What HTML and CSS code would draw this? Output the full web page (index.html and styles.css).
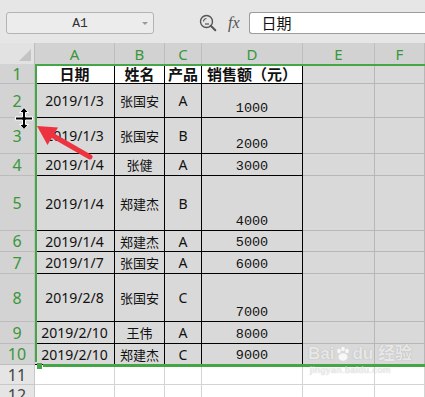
FILE: index.html
```html
<!DOCTYPE html>
<html lang="zh">
<head>
    <meta charset="UTF-8">
    <title>表格</title>
    <link rel="stylesheet" href="styles.css">
</head>
<body>
    <div class="toolbar">
        <div class="namebox">A1<span class="caret"></span></div>
        <svg class="zoom-icon" width="18" height="18" viewBox="0 0 18 18">
            <circle cx="7.5" cy="7.5" r="6" fill="none" stroke="#555" stroke-width="1.4"/>
            <path d="M4.5 7.5a3 3 0 0 1 3-3" fill="none" stroke="#555" stroke-width="1.2"/>
            <path d="M6 10h4" stroke="#555" stroke-width="1.2"/>
            <path d="M11.8 11.8l4.5 4.5" stroke="#555" stroke-width="2" stroke-linecap="round"/>
        </svg>
        <span class="fx">fx</span>
        <div class="formula">日期</div>
    </div>

    <div class="sheet">
        <div class="row colhead">
            <div class="cell corner"><span class="tri"></span></div>
            <div class="cell ca">A</div>
            <div class="cell cb">B</div>
            <div class="cell cc">C</div>
            <div class="cell cd">D</div>
            <div class="cell ce">E</div>
            <div class="cell cf">F</div>
        </div>
        <div class="row h20">
            <div class="cell rh">1</div>
            <div class="cell ca t w th">日期</div>
            <div class="cell cb t w th">姓名</div>
            <div class="cell cc t w th">产品</div>
            <div class="cell cd t w th">销售额（元）</div>
            <div class="cell ce"></div>
            <div class="cell cf"></div>
        </div>
        <div class="row h34">
            <div class="cell rh">2</div>
            <div class="cell ca t dt">2019/1/3</div>
            <div class="cell cb t nm">张国安</div>
            <div class="cell cc t dt">A</div>
            <div class="cell cd t amt">1000</div>
            <div class="cell ce"></div>
            <div class="cell cf"></div>
        </div>
        <div class="row h36">
            <div class="cell rh">3</div>
            <div class="cell ca t dt">2019/1/3</div>
            <div class="cell cb t nm">张国安</div>
            <div class="cell cc t dt">B</div>
            <div class="cell cd t amt">2000</div>
            <div class="cell ce"></div>
            <div class="cell cf"></div>
        </div>
        <div class="row h22">
            <div class="cell rh">4</div>
            <div class="cell ca t dt">2019/1/4</div>
            <div class="cell cb t nm">张健</div>
            <div class="cell cc t dt">A</div>
            <div class="cell cd t amt">3000</div>
            <div class="cell ce"></div>
            <div class="cell cf"></div>
        </div>
        <div class="row h55">
            <div class="cell rh">5</div>
            <div class="cell ca t dt">2019/1/4</div>
            <div class="cell cb t nm">郑建杰</div>
            <div class="cell cc t dt">B</div>
            <div class="cell cd t amt">4000</div>
            <div class="cell ce"></div>
            <div class="cell cf"></div>
        </div>
        <div class="row h21">
            <div class="cell rh">6</div>
            <div class="cell ca t dt">2019/1/4</div>
            <div class="cell cb t nm">郑建杰</div>
            <div class="cell cc t dt">A</div>
            <div class="cell cd t amt">5000</div>
            <div class="cell ce"></div>
            <div class="cell cf"></div>
        </div>
        <div class="row h22">
            <div class="cell rh">7</div>
            <div class="cell ca t dt">2019/1/7</div>
            <div class="cell cb t nm">张国安</div>
            <div class="cell cc t dt">A</div>
            <div class="cell cd t amt">6000</div>
            <div class="cell ce"></div>
            <div class="cell cf"></div>
        </div>
        <div class="row h48">
            <div class="cell rh">8</div>
            <div class="cell ca t dt">2019/2/8</div>
            <div class="cell cb t nm">张国安</div>
            <div class="cell cc t dt">C</div>
            <div class="cell cd t amt">7000</div>
            <div class="cell ce"></div>
            <div class="cell cf"></div>
        </div>
        <div class="row h22">
            <div class="cell rh">9</div>
            <div class="cell ca t dt">2019/2/10</div>
            <div class="cell cb t nm">王伟</div>
            <div class="cell cc t dt">A</div>
            <div class="cell cd t amt">8000</div>
            <div class="cell ce"></div>
            <div class="cell cf"></div>
        </div>
        <div class="row h21">
            <div class="cell rh">10</div>
            <div class="cell ca t dt">2019/2/10</div>
            <div class="cell cb t nm">郑建杰</div>
            <div class="cell cc t dt">C</div>
            <div class="cell cd t amt">9000</div>
            <div class="cell ce"></div>
            <div class="cell cf"></div>
        </div>
        <div class="row h20 blank">
            <div class="cell rh off">11</div>
            <div class="cell ca"></div>
            <div class="cell cb"></div>
            <div class="cell cc"></div>
            <div class="cell cd"></div>
            <div class="cell ce"></div>
            <div class="cell cf"></div>
        </div>
        <div class="row h20 blank">
            <div class="cell rh off">12</div>
            <div class="cell ca"></div>
            <div class="cell cb"></div>
            <div class="cell cc"></div>
            <div class="cell cd"></div>
            <div class="cell ce"></div>
            <div class="cell cf"></div>
        </div>
    </div>

    <!-- selection frame -->
    <div class="sel"></div>
    <div class="sel-bottom"></div>
    <div class="handle"></div>

    <!-- row resize cursor -->
    <svg class="cursor" width="20" height="22" viewBox="0 0 20 22">
        <path d="M10 0.5l-4.5 5h3v4.5H1.5v3h7v4.5h-3l4.5 5 4.5-5h-3v-4.5h7v-3h-7V5.5h3z" fill="#000" stroke="#fff" stroke-width="1" stroke-linejoin="round"/>
    </svg>

    <!-- red arrow -->
    <svg class="arrow" width="80" height="50" viewBox="30 115 80 50">
        <line x1="50" y1="134" x2="90" y2="157" stroke="#ee3340" stroke-width="5" stroke-linecap="round"/>
        <polygon points="37,126 58,127.5 47.5,145" fill="#ee3340"/>
    </svg>

    <div class="watermark">
        <div class="wm-top">Bai<svg class="paw" width="16" height="16" viewBox="0 0 16 16">
                <ellipse cx="4" cy="5" rx="1.8" ry="2.3"/>
                <ellipse cx="8" cy="3" rx="1.8" ry="2.3"/>
                <ellipse cx="12" cy="5" rx="1.8" ry="2.3"/>
                <ellipse cx="8" cy="11" rx="4.5" ry="3.8"/>
            </svg>du 经验</div>
        <div class="wm-url">jingyan.baidu.com</div>
    </div>
</body>
</html>
```

FILE: styles.css
```css
body {
    margin: 0;
    width: 425px;
    height: 397px;
    overflow: hidden;
    position: relative;
    font-family: "Noto Sans", "Noto Sans CJK SC", sans-serif;
    color: #111;
    background: #fff;
}

/* formula bar */
.toolbar {
    height: 43px;
    box-sizing: border-box;
    padding-top: 12px;
    display: flex;
    align-items: flex-start;
    background: #e6e6e6;
}
.namebox {
    position: relative;
    margin-left: 6px;
    width: 148px;
    height: 22px;
    box-sizing: border-box;
    border: 1px solid #b3b3b3;
    border-radius: 3px;
    background: #ececec;
    display: flex;
    align-items: center;
    justify-content: center;
    font: 13px "Liberation Mono", monospace;
    color: #333;
}
.caret {
    position: absolute;
    right: 5px;
    top: 9px;
    border-top: 3px solid #999;
    border-left: 3px solid transparent;
    border-right: 3px solid transparent;
}
.zoom-icon {
    margin-left: 45px;
    margin-top: 2px;
}
.fx {
    margin-left: 11px;
    font: italic 16px "Liberation Serif", serif;
    color: #555;
    line-height: 22px;
}
.formula {
    flex: 1;
    margin-left: 9px;
    height: 22px;
    box-sizing: border-box;
    border: 1px solid #9c9c9c;
    border-right: none;
    border-radius: 3px 0 0 3px;
    background: #fff;
    padding-left: 12px;
    font-size: 15px;
    line-height: 20px;
    font-family: "Noto Sans CJK SC", sans-serif;
}

/* grid */
.row {
    display: flex;
    height: 20px;
}
.colhead { height: 21px; }
.h20 { height: 20px; }
.h21 { height: 21px; }
.h22 { height: 22px; }
.h34 { height: 34px; }
.h36 { height: 36px; }
.h48 { height: 48px; }
.h55 { height: 55px; }

.cell {
    box-sizing: border-box;
    flex: none;
    border-right: 1px solid #b7b7b7;
    border-bottom: 1px solid #b7b7b7;
    background: #d9d9d9;
    display: flex;
    align-items: center;
    justify-content: center;
    font-size: 14px;
    white-space: nowrap;
}
.ca { width: 80px; }
.cb { width: 50px; }
.cc { width: 37px; }
.cd { width: 101px; }
.ce { width: 72px; }
.cf { flex: 1; }

.colhead .cell {
    background: #d2d2d2;
    border-color: #bdbdbd;
    border-bottom: none;
    color: #3a963a;
    font-size: 15px;
}
.colhead .corner {
    width: 35px;
    position: relative;
    background: #e2e2e2;
}
.tri {
    position: absolute;
    right: 3px;
    bottom: 3px;
    border-bottom: 12px solid #c4c4c4;
    border-left: 12px solid transparent;
}
.rh {
    width: 35px;
    background: #d3d3d3;
    border-right-color: #c2c2c2;
    border-bottom-color: #bcbcbc;
    color: #3a963a;
    font-size: 16px;
}
.rh.off {
    background: #e5e5e5;
    color: #444;
}

.t { border-color: #000; }
.w { background: #fff; }
.th {
    font-weight: bold;
    font-size: 15px;
    font-family: "Noto Sans CJK SC", sans-serif;
}
.dt { font-size: 14px; }
.nm {
    font-size: 13px;
    font-family: "Noto Sans CJK SC", sans-serif;
}
.amt {
    align-items: flex-end;
    padding-bottom: 1px;
    font: 13.5px "Liberation Mono", monospace;
}

.blank .cell {
    background: #fff;
    border-color: #d4d4d4;
}
.blank .rh {
    background: #e5e5e5;
    border-color: #c8c8c8;
}

/* selection */
.sel {
    position: absolute;
    left: 35px;
    top: 64px;
    right: 0;
    height: 296px;
    border-top: 2px solid #46a546;
    border-left: 2px solid #46a546;
}
.sel-bottom {
    position: absolute;
    left: 43px;
    right: 0;
    top: 364px;
    height: 3px;
    background: #46a546;
}
.handle {
    position: absolute;
    left: 37px;
    top: 363px;
    width: 5px;
    height: 6px;
    background: #46a546;
}

.cursor {
    position: absolute;
    left: 14px;
    top: 107px;
}
.arrow {
    position: absolute;
    left: 30px;
    top: 115px;
}

.watermark {
    position: absolute;
    left: 308px;
    top: 343px;
    color: rgba(255, 255, 255, 0.75);
    text-shadow: 0 0 1px rgba(120, 120, 120, 0.6);
}
.wm-top {
    display: flex;
    align-items: center;
    font: bold 17px "Liberation Sans", "Noto Sans CJK SC", sans-serif;
    line-height: 22px;
}
.paw {
    fill: rgba(255, 255, 255, 0.8);
    margin: 0 1px;
}
.wm-url {
    font: 9px "Liberation Sans", sans-serif;
    letter-spacing: 0.5px;
    padding-left: 2px;
}
```
